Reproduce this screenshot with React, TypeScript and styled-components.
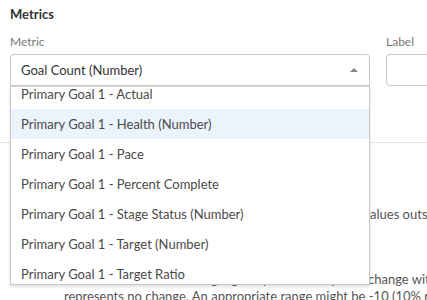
import React from "react";
import styled, { createGlobalStyle } from "styled-components";

const GlobalStyle = createGlobalStyle`
  body {
    margin: 0;
    background: #fff;
    font-family: Lato, "Open Sans", Arial, sans-serif;
    color: #333;
  }
`;

const Page = styled.div`
  position: relative;
  width: 427px;
  height: 300px;
  overflow: hidden;
  padding: 6px 0 0 10px;
  box-sizing: border-box;
`;

const SectionTitle = styled.div`
  font-size: 13px;
  font-weight: 700;
  color: #333;
  line-height: 16px;
  margin-bottom: 12px;
`;

const FieldRow = styled.div`
  display: flex;
  gap: 16px;
`;

const Field = styled.div<{ $width: number }>`
  display: flex;
  flex-direction: column;
  width: ${({ $width }) => $width}px;
  flex-shrink: 0;
`;

const FieldLabel = styled.div`
  font-size: 12px;
  color: #777;
  line-height: 15px;
  margin-bottom: 5px;
`;

const SelectWrap = styled.div`
  position: relative;
`;

const SelectBox = styled.div<{ $open?: boolean }>`
  height: 32px;
  box-sizing: border-box;
  border: 1px solid #c8c8c8;
  border-radius: ${({ $open }) => ($open ? "4px 4px 0 0" : "4px")};
  display: flex;
  align-items: center;
  justify-content: space-between;
  padding: 0 11px 0 10px;
  font-size: 13px;
  color: #333;
  background: #fff;
`;

const Caret = styled.span`
  width: 0;
  height: 0;
  border-left: 4px solid transparent;
  border-right: 4px solid transparent;
  border-bottom: 4px solid #888;
`;

const Menu = styled.div`
  position: absolute;
  top: 32px;
  left: 0;
  right: 0;
  height: 198px;
  background: #fff;
  border: 1px solid #c8c8c8;
  border-top: none;
  box-shadow: 0 2px 3px rgba(0, 0, 0, 0.12);
  overflow: hidden;
  z-index: 2;
`;

const MenuList = styled.div`
  margin-top: -7px;
`;

const MenuItem = styled.div<{ $active?: boolean }>`
  height: 30px;
  display: flex;
  align-items: center;
  padding: 0 10px;
  font-size: 13px;
  color: #4a4a4a;
  white-space: nowrap;
  background: ${({ $active }) => ($active ? "#ebf3fd" : "#fff")};
`;

const MenuTopLine = styled.div`
  position: absolute;
  top: 0;
  left: 0;
  right: 0;
  height: 1px;
  background: #d6d6d6;
`;

const Divider = styled.div`
  height: 1px;
  background: #e3e3e3;
  margin: 56px 0 0 -10px;
`;

const HelpBlock = styled.div`
  padding-left: 54px;
  font-size: 13px;
  color: #555;
  line-height: 17px;
  white-space: nowrap;
`;

const HelpLine = styled.div<{ $gap?: number }>`
  display: flex;
  margin-top: ${({ $gap }) => $gap ?? 0}px;
`;

const HelpLead = styled.span<{ $width: number }>`
  display: flex;
  justify-content: flex-end;
  width: ${({ $width }) => $width}px;
  flex-shrink: 0;
  overflow: hidden;
`;

const options = [
  "Primary Goal 1 - Actual",
  "Primary Goal 1 - Health (Number)",
  "Primary Goal 1 - Pace",
  "Primary Goal 1 - Percent Complete",
  "Primary Goal 1 - Stage Status (Number)",
  "Primary Goal 1 - Target (Number)",
  "Primary Goal 1 - Target Ratio",
];

export default function App() {
  return (
    <>
      <GlobalStyle />
      <Page>
        <SectionTitle>Metrics</SectionTitle>
        <FieldRow>
          <Field $width={360}>
            <FieldLabel>Metric</FieldLabel>
            <SelectWrap>
              <SelectBox $open>
                <span>Goal Count (Number)</span>
                <Caret />
              </SelectBox>
              <Menu>
                <MenuList>
                  {options.map((o, i) => (
                    <MenuItem key={o} $active={i === 1}>
                      {o}
                    </MenuItem>
                  ))}
                </MenuList>
                <MenuTopLine />
              </Menu>
            </SelectWrap>
          </Field>
          <Field $width={120}>
            <FieldLabel>Label</FieldLabel>
            <SelectBox />
          </Field>
        </FieldRow>
        <Divider />
        <HelpBlock>
          <HelpLine $gap={63}>
            <HelpLead $width={306}>Color the cells that hold v</HelpLead>
            <span>alues outside the range.</span>
          </HelpLine>
          <HelpLine $gap={48}>
            <HelpLead $width={304}>Highlight a period over period </HelpLead>
            <span>change with</span>
          </HelpLine>
          <HelpLine>represents no change. An appropriate range might be -10 (10% reduction)</HelpLine>
        </HelpBlock>
      </Page>
    </>
  );
}
